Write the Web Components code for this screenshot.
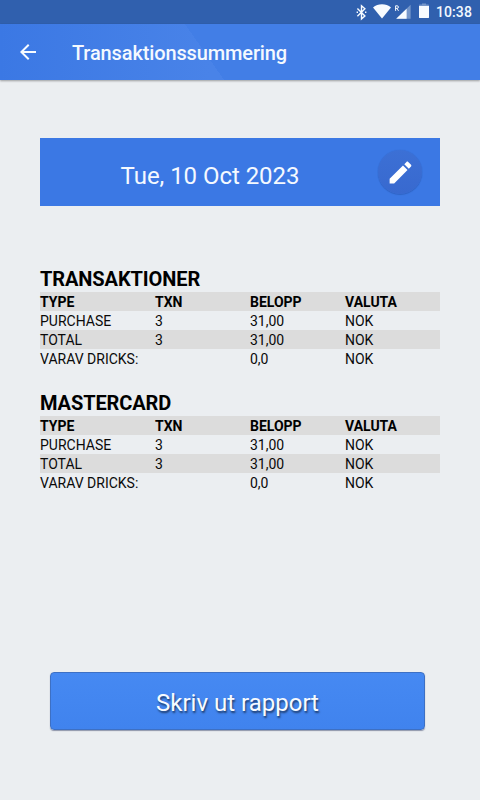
<!DOCTYPE html>
<html lang="sv">
<head>
<meta charset="UTF-8">
<meta name="viewport" content="width=device-width, initial-scale=1">
<title>Transaktionssummering</title>
<style>
  * { box-sizing: border-box; }
  html, body { height: 100%; margin: 0; }
  body {
    background: #ebeef1;
    color: #0a0a0a;
    font-family: Roboto, "Liberation Sans", sans-serif;
    overflow: hidden;
  }
</style>
</head>
<body>
<report-screen>
  <status-bar slot="header" time="10:38"></status-bar>
  <app-bar slot="header">Transaktionssummering</app-bar>
  <date-picker-bar>Tue, 10 Oct 2023</date-picker-bar>
  <report-list></report-list>
  <primary-button slot="footer">Skriv ut rapport</primary-button>
</report-screen>

<script>
/**
 * Transaction summary report
 */

const REPORTS = [
  {
    title: 'TRANSAKTIONER',
    rows: [
      ['PURCHASE', '3', '31,00', 'NOK'],
      ['TOTAL', '3', '31,00', 'NOK'],
      ['VARAV DRICKS:', '', '0,0', 'NOK']
    ]
  },
  {
    title: 'MASTERCARD',
    rows: [
      ['PURCHASE', '3', '31,00', 'NOK'],
      ['TOTAL', '3', '31,00', 'NOK'],
      ['VARAV DRICKS:', '', '0,0', 'NOK']
    ]
  }
];

const COLUMNS = ['TYPE', 'TXN', 'BELOPP', 'VALUTA'];

// --- Web Component: Screen layout ---
class ReportScreen extends HTMLElement {
  constructor() {
    super();
    this.attachShadow({ mode: 'open' });
    this.shadowRoot.innerHTML = `
      <style>
        :host {
          display: flex;
          flex-direction: column;
          height: 800px;
          width: 480px;
        }
        main {
          flex: 1;
          padding: 58px 40px 0;
        }
        footer {
          padding: 0 55px 69px 50px;
        }
      </style>
      <slot name="header"></slot>
      <main><slot></slot></main>
      <footer><slot name="footer"></slot></footer>
    `;
  }
}
customElements.define('report-screen', ReportScreen);

// --- Web Component: Status bar ---
class StatusBar extends HTMLElement {
  constructor() {
    super();
    this.attachShadow({ mode: 'open' });
  }

  connectedCallback() {
    this.shadowRoot.innerHTML = `
      <style>
        :host {
          display: flex;
          justify-content: flex-end;
          align-items: center;
          box-sizing: border-box;
          height: 24px;
          padding-right: 8px;
          background: #3060ae;
          color: #f2f8ff;
        }
        svg {
          display: block;
          fill: #f7fbff;
        }
        .bluetooth { margin-right: 6px; }
        .wifi { margin-right: 3px; }
        .signal { margin-right: 8px; }
        .battery { margin-right: 7px; }
        .time {
          font-size: 14px;
          font-weight: 500;
          line-height: 24px;
          letter-spacing: 0.1px;
        }
      </style>
      <svg class="bluetooth" width="11" height="24" viewBox="0 0 11 24">
        <path d="M1.4 8.6 8.9 16 5.5 18.9V5.8L8.9 8.8 1.4 16.2" fill="none" stroke="#f7fbff" stroke-width="1.4"/>
        <path d="M.6 11.6H2v1.5H.6zM9 11.6h1.4v1.5H9z"/>
      </svg>
      <svg class="wifi" width="18" height="24" viewBox="0 0 18 24">
        <path d="M0 7.6C2.6 5.4 5.6 4.3 9 4.3s6.4 1.1 9 3.3L9 18.6z"/>
      </svg>
      <svg class="signal" width="17" height="24" viewBox="0 0 17 24">
        <path d="M16.6 4.8V18.8H2.2z" opacity=".35"/>
        <path d="M12.6 8.7V18.8H2.2z"/>
        <path d="M1.6 10.9V5.8h1.5q1.3 0 1.3 1.3T3.1 8.4H1.6M3 8.4l1.5 2.5" fill="none" stroke="#f7fbff" stroke-width="1"/>
      </svg>
      <svg class="battery" width="10" height="24" viewBox="0 0 10 24">
        <path d="M0 5.4q0-.8.8-.8H3V3.6h4v1h2.2q.8 0 .8.8V7H0z" opacity=".35"/>
        <path d="M0 6h10v11.2q0 .9-.9.9H.9q-.9 0-.9-.9z"/>
      </svg>
      <span class="time">${this.getAttribute('time')}</span>
    `;
  }
}
customElements.define('status-bar', StatusBar);

// --- Web Component: App bar ---
class AppBar extends HTMLElement {
  constructor() {
    super();
    this.attachShadow({ mode: 'open' });
    this.shadowRoot.innerHTML = `
      <style>
        :host {
          display: grid;
          grid-template-columns: 72px 1fr;
          align-items: center;
          height: 56px;
          background: linear-gradient(55deg, transparent 0 50%, #427ee6 50%) 0 0 / 409px 56px no-repeat,
            linear-gradient(90deg, #3b78e4, #4983e8 210px, #4983e8 240px, #427ee6 240px);
          box-shadow: 0 1px 2px rgba(0, 0, 0, .35);
          color: #f4f9ff;
        }
        svg {
          display: block;
          margin-left: 16px;
        }
        h1 {
          margin: 0;
          padding-top: 2px;
          font-size: 20px;
          font-weight: 500;
          line-height: 24px;
          letter-spacing: -0.13px;
        }
      </style>
      <svg width="24" height="24" viewBox="0 0 24 24" fill="#f7fbff">
        <path d="M20 11H7.83l5.59-5.59L12 4l-8 8 8 8 1.41-1.41L7.83 13H20v-2z"/>
      </svg>
      <h1><slot></slot></h1>
    `;
  }
}
customElements.define('app-bar', AppBar);

// --- Web Component: Date bar with edit button ---
class DatePickerBar extends HTMLElement {
  constructor() {
    super();
    this.attachShadow({ mode: 'open' });
    this.shadowRoot.innerHTML = `
      <style>
        :host {
          display: grid;
          grid-template-columns: 1fr 46px;
          align-items: center;
          box-sizing: border-box;
          height: 68px;
          padding: 0 17px 0 3px;
          background: #3b78e4;
          color: #f4f9ff;
        }
        .date {
          padding-top: 7px;
          font-size: 24px;
          line-height: 28px;
          letter-spacing: -0.05px;
          text-align: center;
        }
        .edit {
          display: grid;
          place-items: center;
          width: 44px;
          height: 44px;
          margin: 1px;
          border-radius: 50%;
          background: linear-gradient(#3c70d5, #3869cf);
          box-shadow: 0 0 1px rgba(20, 50, 120, .3), 0 1px 1px rgba(20, 50, 120, .25);
        }
      </style>
      <div class="date"><slot></slot></div>
      <div class="edit">
        <svg width="29" height="29" viewBox="0 0 24 24" fill="#fff">
          <path d="M3 17.25V21h3.75L17.81 9.94l-3.75-3.75L3 17.25zM20.71 7.04c.39-.39.39-1.02 0-1.41l-2.34-2.34c-.39-.39-1.02-.39-1.41 0l-1.83 1.83 3.75 3.75 1.83-1.83z"/>
        </svg>
      </div>
    `;
  }
}
customElements.define('date-picker-bar', DatePickerBar);

// --- Web Component: Report table ---
class ReportTable extends HTMLElement {
  constructor() {
    super();
    this.attachShadow({ mode: 'open' });
  }

  set report(data) {
    const rows = [COLUMNS, ...data.rows];
    this.shadowRoot.innerHTML = `
      <style>
        :host {
          display: block;
        }
        h2 {
          margin: 0;
          padding-bottom: 2px;
          font-size: 20px;
          font-weight: 700;
          line-height: 22px;
          letter-spacing: -0.1px;
          color: #000;
        }
        .row {
          display: grid;
          grid-template-columns: 115px 95px 95px 95px;
          height: 19px;
          font-size: 14px;
          line-height: 20px;
          white-space: nowrap;
        }
        .row:nth-of-type(odd) {
          background: #dcdcdc;
        }
        .row:first-of-type {
          font-weight: 700;
          color: #000;
        }
      </style>
      <h2>${data.title}</h2>
      ${rows.map(row => `
        <div class="row">${row.map(cell => `<span>${cell}</span>`).join('')}</div>
      `).join('')}
    `;
  }
}
customElements.define('report-table', ReportTable);

// --- Web Component: Report list ---
class ReportList extends HTMLElement {
  constructor() {
    super();
    this.attachShadow({ mode: 'open' });
    this.shadowRoot.innerHTML = `
      <style>
        :host {
          display: flex;
          flex-direction: column;
          gap: 24px;
          padding-top: 62px;
        }
      </style>
    `;
  }

  connectedCallback() {
    REPORTS.forEach(item => {
      const table = document.createElement('report-table');
      table.report = item;
      this.shadowRoot.appendChild(table);
    });
  }
}
customElements.define('report-list', ReportList);

// --- Web Component: Primary button ---
class PrimaryButton extends HTMLElement {
  constructor() {
    super();
    this.attachShadow({ mode: 'open' });
    this.shadowRoot.innerHTML = `
      <style>
        :host {
          display: block;
        }
        button {
          display: block;
          box-sizing: border-box;
          width: 100%;
          height: 58px;
          margin-bottom: 1px;
          padding: 3px 0 0;
          border: 1px solid #3d70c4;
          border-radius: 4px;
          background: linear-gradient(#4689f2, #4083ee);
          box-shadow: 0 1px 1px rgba(50, 60, 100, .5);
          color: #f7fbff;
          font: 400 24px/28px Roboto, "Liberation Sans", sans-serif;
          text-shadow: 1px 2px 2px rgba(0, 0, 0, .55);
        }
      </style>
      <button type="button"><slot></slot></button>
    `;
  }
}
customElements.define('primary-button', PrimaryButton);
</script>
</body>
</html>
